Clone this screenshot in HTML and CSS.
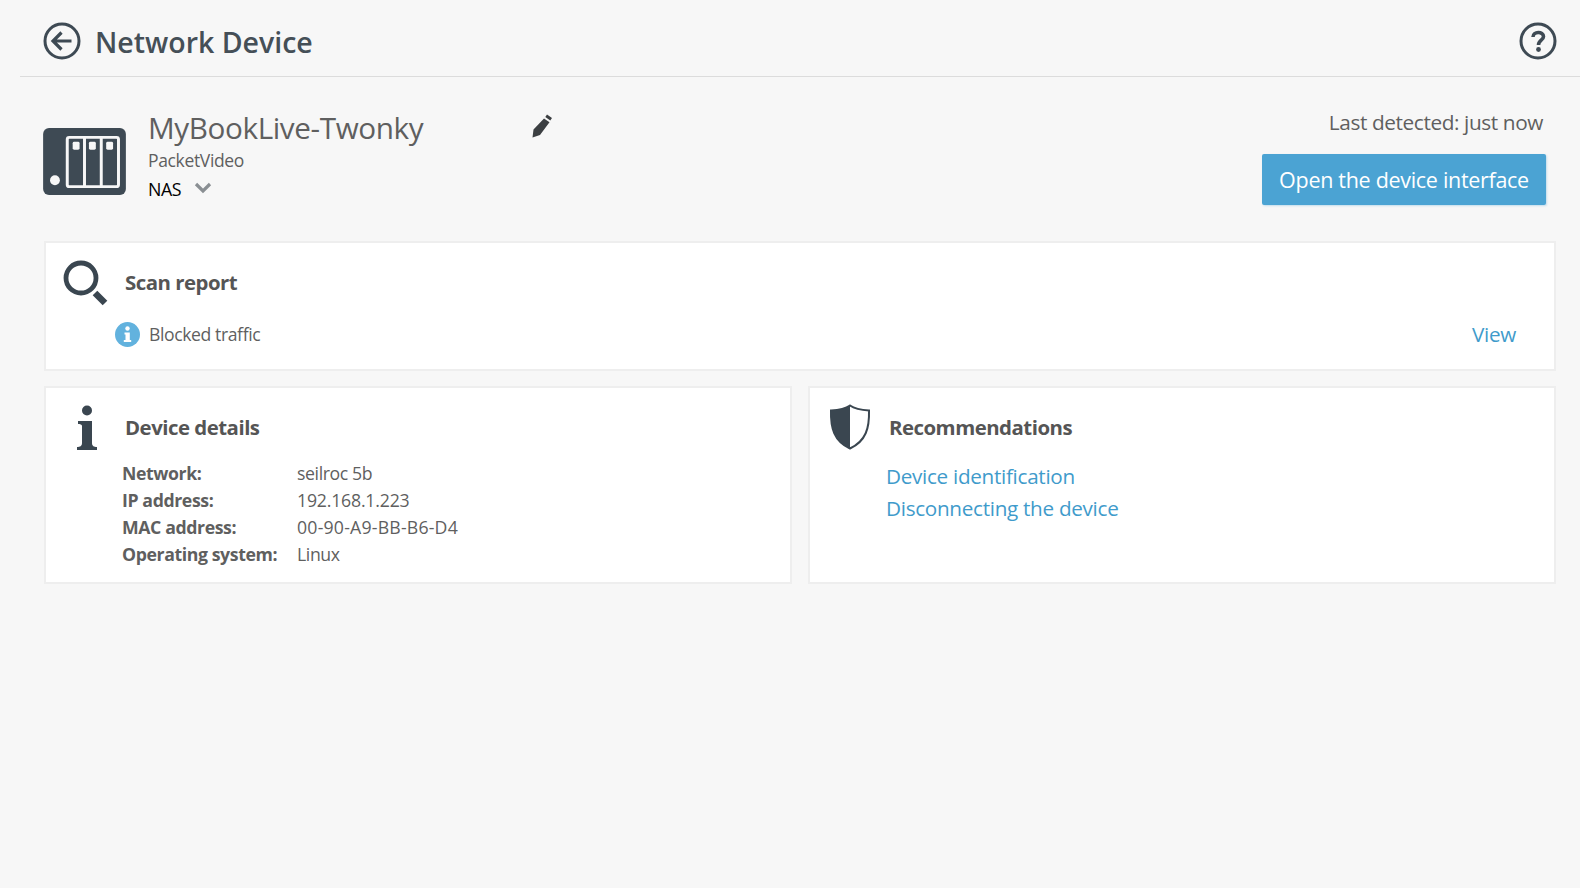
FILE: index.html
```html
<!DOCTYPE html>
<html lang="en">
<head>
  <meta charset="UTF-8">
  <title>Network Device</title>
  <link rel="stylesheet" href="styles.css">
</head>
<body>
<!-- Top bar -->
<div class="topbar">
  <svg class="back-icon" viewBox="0 0 38 38" width="38" height="38">
    <circle cx="19" cy="19" r="17" fill="none" stroke="#3e4a54" stroke-width="3"/>
    <path d="M18.5 10.500 L10 19 L18.500 27.500 M10.500 19 H28.500" fill="none" stroke="#3e4a54" stroke-width="3.200"/>
  </svg>
  <h1 class="page-title">Network Device</h1>
  <svg class="help-icon" viewBox="0 0 38 38" width="38" height="38">
    <circle cx="19" cy="19" r="17" fill="none" stroke="#3e4a54" stroke-width="3"/>
    <path d="M14 15 C14 9 24.500 9 24.500 14.500 C24.500 18.500 19.500 18 19.500 23" fill="none" stroke="#3e4a54" stroke-width="3.600"/>
    <circle cx="19.500" cy="27.500" r="2.400" fill="#3e4a54"/>
  </svg>
</div>

<!-- Device summary -->
<div class="device">
  <svg class="device-icon" viewBox="0 0 84 68" width="83" height="67">
    <rect width="84" height="68" rx="6" fill="#3e4a54"/>
    <circle cx="12" cy="53" r="5" fill="#f7f7f7"/>
    <rect x="24.500" y="9.500" width="52" height="50" rx="2" fill="none" stroke="#f7f7f7" stroke-width="3"/>
    <path d="M42 9.500 V59.500 M59 9.500 V59.500" stroke="#f7f7f7" stroke-width="3"/>
    <rect x="30" y="14" width="7" height="8" rx="1.500" fill="#f7f7f7"/>
    <rect x="46.500" y="14" width="7" height="8" rx="1.500" fill="#f7f7f7"/>
    <rect x="64" y="14" width="7" height="8" rx="1.500" fill="#f7f7f7"/>
  </svg>
  <div class="device-info">
    <div class="device-name">MyBookLive-Twonky</div>
    <div class="device-vendor">PacketVideo</div>
    <div class="device-type">NAS
      <svg class="chevron" viewBox="0 0 18 12" width="18" height="12">
        <path d="M2 2 L9 9 L16 2" fill="none" stroke="#8a8f93" stroke-width="3.200"/>
      </svg>
    </div>
  </div>
  <svg class="edit-icon" viewBox="0 0 20 24" width="20" height="24">
    <path d="M15 .5 L20 4 L18.300 6.500 L13.300 3 Z M12 4.500 L17.500 8.300 L8 21 L.5 23.500 L1.500 15.500 Z" fill="#3c3f42"/>
  </svg>
  <div class="device-actions">
    <div class="last-seen">Last detected: just now</div>
    <a class="open-btn">Open the device interface</a>
  </div>
</div>

<!-- Cards -->
<div class="cards">
  <div class="card card-wide">
    <div class="card-head">
      <svg class="card-icon" viewBox="0 -2 46 46" width="46" height="46">
        <circle cx="19" cy="18" r="15" fill="none" stroke="#3a4650" stroke-width="4.800"/>
        <path d="M33 33 L43 43" stroke="#3a4650" stroke-width="6.500"/>
      </svg>
      <h2>Scan report</h2>
    </div>
    <div class="scan-row">
      <svg class="info-dot" viewBox="0 0 25 25" width="25" height="25">
        <circle cx="12.500" cy="12.500" r="12.500" fill="#62b2de"/>
        <circle cx="12.500" cy="6.500" r="2.200" fill="#fff"/>
        <path d="M9.500 10.500 H14.800 V18 H16.200 V20 H8.800 V18 H10.500 V12.500 H9.500 Z" fill="#fff"/>
      </svg>
      <span class="scan-text">Blocked traffic</span>
      <a class="link view-link">View</a>
    </div>
  </div>

  <div class="card">
    <div class="card-head">
      <svg class="card-icon" viewBox="-1 -2 46 46" width="46" height="46">
        <circle cx="24" cy="5.500" r="5" fill="#3a4650"/>
        <path d="M15 16 H29 V38 C29 41 31 42 34 42 V45 H14 V42 C17 42 19 41 19 38 V21 C19 19.500 17 19 15 19 Z" fill="#3a4650"/>
      </svg>
      <h2>Device details</h2>
    </div>
    <div class="details">
      <span class="detail-label">Network:</span><span>seilroc 5b</span>
      <span class="detail-label">IP address:</span><span class="ip-value">192.168.1.223</span>
      <span class="detail-label">MAC address:</span><span class="mac-value">00-90-A9-BB-B6-D4</span>
      <span class="detail-label">Operating system:</span><span>Linux</span>
    </div>
  </div>

  <div class="card">
    <div class="card-head">
      <svg class="card-icon" viewBox="-2 -1 46 46" width="46" height="46">
        <path d="M22 1.500 C27 5 33 6 41 6.500 C41.500 24 38 37 22 44.500 C6 37 2.500 24 3 6.500 C11 6 17 5 22 1.500 Z" fill="#fff" stroke="#3a4650" stroke-width="2"/>
        <path d="M22 1.500 V44.500 C6 37 2.500 24 3 6.500 C11 6 17 5 22 1.500 Z" fill="#3a4650"/>
      </svg>
      <h2>Recommendations</h2>
    </div>
    <div class="reco-links">
      <a class="link">Device identification</a>
      <a class="link">Disconnecting the device</a>
    </div>
  </div>
</div>
</body>
</html>
```

FILE: styles.css
```css
body {
  margin: 0;
  height: 888px;
  overflow: hidden;
  background: #f7f7f7;
  color: #5f5f5f;
  font-family: "Open Sans", "Noto Sans", sans-serif;
}

h1, h2 {
  margin: 0;
}

.topbar {
  display: flex;
  align-items: center;
  box-sizing: content-box;
  height: 70px;
  margin-left: 20px;
  padding: 6px 23px 0 23px;
  border-bottom: 1px solid #dcdcdc;
}

.page-title {
  flex: 1;
  margin-left: 14px;
  padding-top: 2px;
  font-size: 28.500px;
  font-weight: 600;
  color: #454f57;
}

.device {
  display: flex;
  height: 164px;
  padding-left: 43px;
  padding-right: 34px;
}

.device-icon {
  margin-top: 51px;
}

.device-info {
  width: 386px;
  margin-left: 22px;
  margin-top: 31px;
}

.device-name {
  font-size: 29.700px;
  line-height: 40px;
  letter-spacing: -0.4px;
}

.device-vendor {
  font-size: 17.500px;
  line-height: 24px;
  letter-spacing: -0.35px;
}

.device-type {
  margin-top: 5px;
  font-size: 17.800px;
  line-height: 24px;
  color: #000;
  letter-spacing: -0.4px;
}

.chevron {
  margin-left: 9px;
  vertical-align: 2px;
}

.edit-icon {
  margin-top: 37px;
  margin-left: -2px;
}

.device-actions {
  flex: 1;
  text-align: right;
  margin-top: 31px;
}

.last-seen {
  padding-right: 3px;
  font-size: 20.800px;
  line-height: 28px;
  letter-spacing: -0.4px;
}

.open-btn {
  display: inline-block;
  width: 284px;
  height: 51px;
  margin-top: 18px;
  background: #4ba3d3;
  border-radius: 2px;
  box-shadow: 1px 1px 2px rgba(75,163,211,0.3);
  color: #fff;
  font-size: 21.500px;
  line-height: 51px;
  text-align: center;
  letter-spacing: -0.3px;
}

.cards {
  display: grid;
  grid-template-columns: 748px 748px;
  gap: 15px 16px;
  padding-left: 44px;
}

.card {
  height: 198px;
  box-sizing: border-box;
  background: #fff;
  border: 2px solid #eeeeee;
}

.card-wide {
  grid-column: span 2;
  height: 130px;
}

.card-head {
  display: flex;
  align-items: center;
  box-sizing: border-box;
  height: 70px;
  padding: 6px 0 0 16px;
}

.card-icon {
  overflow: visible;
}

.card-head h2 {
  margin-left: 17px;
  padding-top: 2px;
  font-size: 20.400px;
  font-weight: 700;
  letter-spacing: -0.5px;
  color: #555;
}

.scan-row {
  display: flex;
  align-items: center;
  padding: 7px 38px 0 69px;
}

.scan-text {
  flex: 1;
  margin-left: 9px;
  font-size: 17.600px;
  letter-spacing: -0.4px;
}

.link {
  color: #3f9bcb;
  font-size: 20.700px;
  letter-spacing: -0.3px;
}

.details {
  display: grid;
  grid-template-columns: 175px 1fr;
  padding-left: 76px;
  margin-top: 2px;
  font-size: 17.700px;
  line-height: 27px;
  letter-spacing: -0.4px;
}

.detail-label {
  font-weight: 700;
}

.ip-value {
  letter-spacing: -0.2px;
}

.mac-value {
  letter-spacing: 0.2px;
}

.reco-links {
  display: flex;
  flex-direction: column;
  padding-left: 76px;
  margin-top: 2px;
  line-height: 32px;
}
```
